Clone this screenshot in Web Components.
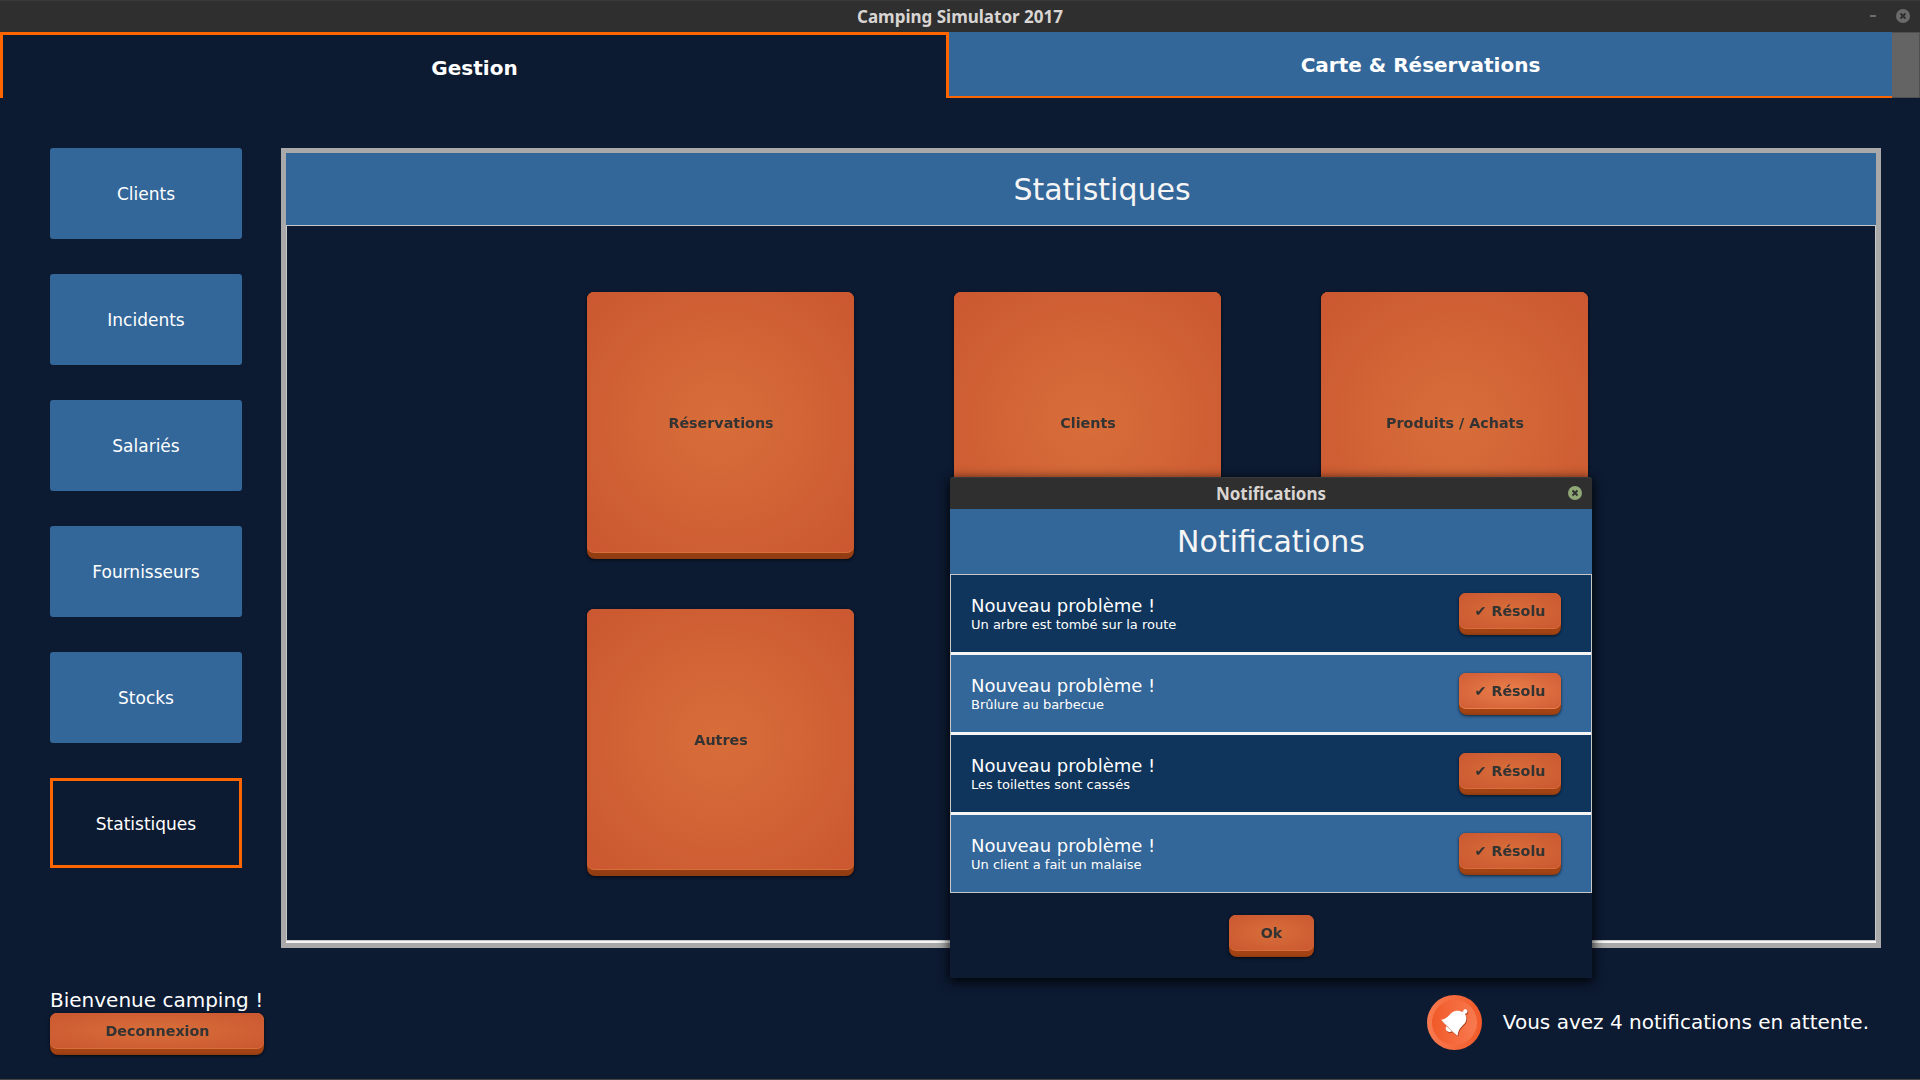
<!DOCTYPE html>
<html lang="fr">
<head>
<meta charset="utf-8">
<title>Camping Simulator 2017</title>
<style>
html,body{margin:0;width:1920px;height:1080px;overflow:hidden;background:#0c1a32}
body{font-family:"DejaVu Sans","Noto Sans",sans-serif;color:#fff}
</style>
</head>
<body>
<camping-app></camping-app>
<script>
const define = (name, html) => customElements.define(name, class extends HTMLElement {
  constructor() {
    super();
    this.attachShadow({ mode: 'open' }).innerHTML = html;
  }
});

define('title-bar', `
<style>
:host{display:grid;grid-template-columns:1fr auto 1fr;align-items:center;height:32px;box-sizing:border-box;
  background:#2f2f2f;border-top:1px solid #393939;font:bold 17px/29px "Noto Sans",sans-serif;color:#d9d5d3}
.t{grid-column:2}
.c{grid-column:3;justify-self:end;display:flex;align-items:center;gap:20px;padding:0 10px 1px 0}
.m{width:6px;height:2px;background:#6d6d6d}
svg{display:block}
:host(:not([minimizable])) .m{display:none}
</style>
<span class="t"><slot></slot></span>
<span class="c"><span class="m"></span>
<svg width="14" height="14" viewBox="0 0 14 14"><circle cx="7" cy="7" r="7" fill="var(--close,#6a6a6a)"/><path d="M4.5 4.5l5 5M9.5 4.5l-5 5" stroke="#2f2f2f" stroke-width="1.9"/></svg></span>`);

define('main-tab', `
<style>
:host{display:block;box-sizing:border-box;height:66px;text-align:center;font-weight:bold;font-size:20px;
  line-height:66px;background:#336699;border-bottom:2px solid #ff6600}
:host([selected]){background:none;border:3px solid #ff6600;border-bottom:0;line-height:67px}
</style><slot></slot>`);

define('nav-button', `
<style>
:host{display:block;box-sizing:border-box;width:192px;height:91px;border-radius:3px;background:#336699;
  text-align:center;font-size:17px;line-height:93px}
:host([selected]){height:90px;background:none;border:3px solid #ff6600;border-radius:0;line-height:86px}
</style><slot></slot>`);

define('bevel-button', `
<style>
:host{display:flex;box-sizing:border-box;width:var(--w);height:var(--h,42px);border-radius:8px;padding-bottom:6px;
  background:linear-gradient(#a34313 93%,#903b12);filter:drop-shadow(0 1px 1.5px rgba(0,0,0,.65));
  font-weight:bold;font-size:14.3px;color:#333}
.edge{flex:1;display:flex;background:var(--c1,#d86e3a);border-radius:7px;padding-bottom:1px}
.face{flex:1;display:flex;align-items:center;justify-content:center;border-radius:7px;padding:var(--drop,0px) 0 0 var(--nudge,0px);
  background:radial-gradient(100% 100% at center,var(--c1,#d86e3a),var(--c2,#c54e2c));white-space:pre}
:host([hot]){--c1:#ea7f4b;--c2:#c54e2c}
</style><div class="edge"><div class="face"><slot></slot></div></div>`);

define('problem-row', `
<style>
:host{display:flex;align-items:flex-start;justify-content:space-between;height:77px;box-sizing:border-box;
  background:#0f355c;padding:18px 30px 0 20px}
:host([alt]){background:#336699}
.a{font-size:18px;line-height:24px;margin-top:1px}
.b{font-size:13px;line-height:16px;margin-top:-1px}
</style>
<div><div class="a">Nouveau problème !</div><div class="b"><slot></slot></div></div>
<slot name="action"></slot>`);

define('panel-heading', `
<style>
:host{display:block;box-sizing:border-box;background:#336699;color:#f5f5f5;text-align:center;font-size:30px}
</style><slot></slot>`);

define('bell-badge', `
<style>:host{display:block}svg{display:block}</style>
<svg width="55" height="55" viewBox="0 0 55 55">
<defs><linearGradient id="o" x1="0" x2="1"><stop offset="0" stop-color="#f87a50"/><stop offset="1" stop-color="#f15a29"/></linearGradient>
<linearGradient id="i" x1="0" x2="1"><stop offset="0" stop-color="#f15a29"/><stop offset="1" stop-color="#f87a50"/></linearGradient>
<g id="bell"><path d="M14.300 24.800C20 24 21.500 20.500 24.800 17.700C27.500 15.500 32 15.200 35 17L36.300 16.300C36.100 14.800 37.300 14 38.500 14.200C40 14.400 40.800 15.700 40.400 17C40.200 18 39.300 18.600 38.400 18.600L38.200 19.600C40 22 39.600 26 37.600 28.400C35 31 30.800 34.500 30.700 40.700C29 39.500 24.500 36 21.500 32.500C19 30 16 27.500 14.300 24.800Z"/><path d="M19.400 31.300C23.200 34.600 22.500 34 25 36.300C22.600 37.600 19.700 36.800 18.900 34.600C18.500 33.400 18.700 32.200 19.400 31.300Z"/></g></defs>
<circle cx="27.500" cy="27.500" r="27.500" fill="url(#o)"/><circle cx="27.500" cy="27.500" r="22.500" fill="url(#i)"/>
<use href="#bell" fill="#a63c1c" x=".7" y=".9"/><use href="#bell" fill="#fff"/>
</svg>`);

define('stats-panel', `
<style>
:host{display:flex;flex-direction:column;box-sizing:border-box;width:1600px;height:800px;border:5px solid #a9a9a9;background:#f5f5f5}
panel-heading{height:72px;line-height:73px;padding-left:42px}
.body{box-sizing:border-box;height:716px;border:1px solid #c8c8c8;background:#0c1a32;padding:66px 0 0 300px;
  display:grid;grid-template-columns:repeat(3,267px);grid-auto-rows:267px;gap:50px 100px;align-content:start}
bevel-button{--w:267px;--h:267px;--drop:2px;--nudge:1px}
</style>
<panel-heading>Statistiques</panel-heading>
<div class="body"><bevel-button>Réservations</bevel-button><bevel-button>Clients</bevel-button><bevel-button>Produits / Achats</bevel-button><bevel-button>Autres</bevel-button></div>`);

define('notification-window', `
<style>
:host{display:block;width:642px;height:501px;background:#0c1a32;border-radius:3px 3px 0 0;box-shadow:0 3px 12px 1px rgba(0,0,0,.85)}
title-bar{--close:#8fa876;border-radius:3px 3px 0 0}
panel-heading{height:65px;line-height:66px}
.list{display:flex;flex-direction:column;gap:3px;border:1px solid #c8c8c8;background:#f5f5f5}
bevel-button{--w:102px}
.foot{display:flex;justify-content:center;padding-top:22px}
.foot bevel-button{--w:85px;--nudge:1px}
</style>
<title-bar>Notifications</title-bar>
<panel-heading>Notifications</panel-heading>
<div class="list">
<problem-row>Un arbre est tombé sur la route<bevel-button slot="action">✔ Résolu</bevel-button></problem-row>
<problem-row alt>Brûlure au barbecue<bevel-button slot="action" hot>✔ Résolu</bevel-button></problem-row>
<problem-row>Les toilettes sont cassés<bevel-button slot="action">✔ Résolu</bevel-button></problem-row>
<problem-row alt>Un client a fait un malaise<bevel-button slot="action">✔ Résolu</bevel-button></problem-row>
</div>
<div class="foot"><bevel-button>Ok</bevel-button></div>`);

define('camping-app', `
<style>
:host{display:flex;flex-direction:column;width:1920px;height:1080px;box-sizing:border-box;background:#0c1a32;border-bottom:1px solid #454545}
.tabs{display:grid;grid-template-columns:949px 943px 28px}
main-tab:not([selected]){margin-left:-3px;padding-left:3px}
main-tab[selected]{position:relative;z-index:1}
.filler{box-sizing:border-box;background:#646464;border:solid #505050;border-width:1px 1px 1px 0;height:66px}
.main{display:flex;gap:39px;padding:50px 39px 0 50px}
nav{display:flex;flex-direction:column;gap:35px}
footer{display:flex;justify-content:space-between;padding:40px 51px 0 50px}
.hello{font-size:20px;line-height:25px}
.hello bevel-button{--w:214px;--drop:2px;--nudge:1px;line-height:17px}
.notice{display:flex;align-items:center;gap:21px;font-size:20px;height:55px;margin-top:7px}
.notice span{padding-bottom:2px}
notification-window{position:absolute;left:950px;top:477px}
</style>
<title-bar minimizable>Camping Simulator 2017</title-bar>
<div class="tabs"><main-tab selected>Gestion</main-tab><main-tab>Carte &amp; Réservations</main-tab><div class="filler"></div></div>
<div class="main"><nav><nav-button>Clients</nav-button><nav-button>Incidents</nav-button><nav-button>Salariés</nav-button><nav-button>Fournisseurs</nav-button><nav-button>Stocks</nav-button><nav-button selected>Statistiques</nav-button></nav>
<stats-panel></stats-panel></div>
<footer><div class="hello">Bienvenue camping !<bevel-button>Deconnexion</bevel-button></div>
<div class="notice"><bell-badge></bell-badge><span>Vous avez 4 notifications en attente.</span></div></footer>
<notification-window></notification-window>`);
</script>
</body>
</html>
